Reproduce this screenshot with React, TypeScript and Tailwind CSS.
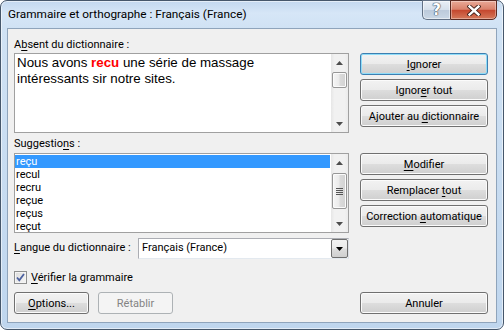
import React from "react";

function U({ children }: { children: React.ReactNode }) {
  return <span className="underline underline-offset-[2px] decoration-1">{children}</span>;
}

function Btn({
  children,
  w,
  def = false,
  disabled = false,
}: {
  children: React.ReactNode;
  w: string;
  def?: boolean;
  disabled?: boolean;
}) {
  if (disabled) {
    return (
      <div
        className={`${w} h-[22px] shrink-0 rounded-[3px] border border-[#adb2b5] bg-[#f4f4f4] flex items-center justify-center text-[11px] text-[#838383] leading-none`}
      >
        {children}
      </div>
    );
  }
  return (
    <div
      className={`${w} h-[22px] shrink-0 rounded-[3px] border ${
        def
          ? "border-[#3c7fb1] shadow-[inset_0_0_0_1px_#8fdcf8]"
          : "border-[#707070] shadow-[inset_0_0_0_1px_#fbfbfb]"
      } bg-[linear-gradient(to_bottom,#f2f2f2_0%,#ebebeb_48%,#dddddd_52%,#cfcfcf_100%)] flex items-center justify-center text-[11px] text-black leading-none`}
    >
      <span>{children}</span>
    </div>
  );
}

function UpArrow() {
  return (
    <svg width="7" height="4" viewBox="0 0 7 4">
      <path d="M3.5 0 L7 4 L0 4 Z" fill="#4d4d4d" />
    </svg>
  );
}
function DownArrow({ color = "#4d4d4d" }: { color?: string }) {
  return (
    <svg width="7" height="4" viewBox="0 0 7 4">
      <path d="M0 0 L7 0 L3.5 4 Z" fill={color} />
    </svg>
  );
}

function Thumb({ h, mt, grip = false }: { h: string; mt: string; grip?: boolean }) {
  return (
    <div
      className={`${h} ${mt} mx-[1px] rounded-[2px] border border-[#979797] bg-[linear-gradient(to_right,#f5f5f5_0%,#ebebeb_45%,#dadada_55%,#d2d2d2_100%)] shadow-[inset_0_0_0_1px_#fbfbfb] flex flex-col items-center justify-center gap-[1px]`}
    >
      {grip && (
        <>
          <div className="w-[7px] h-px bg-[#555]" />
          <div className="w-[7px] h-px bg-[#555]" />
          <div className="w-[7px] h-px bg-[#555]" />
          <div className="w-[7px] h-px bg-[#555]" />
        </>
      )}
    </div>
  );
}

function VScroll({ children }: { children: React.ReactNode }) {
  return (
    <div className="w-[17px] shrink-0 flex flex-col bg-[linear-gradient(to_right,#e6e6e6_0%,#f1f1f1_20%,#f1f1f1_80%,#ebebeb_100%)]">
      <div className="h-[17px] flex items-center justify-center shrink-0">
        <UpArrow />
      </div>
      <div className="flex-1">{children}</div>
      <div className="h-[17px] flex items-center justify-center shrink-0">
        <DownArrow />
      </div>
    </div>
  );
}

export default function App() {
  return (
    <div className="w-[504px] h-[330px] overflow-hidden bg-white">
      <div className="w-[504px] h-[330px] rounded-[7px] border border-[#46576b] bg-[linear-gradient(to_bottom,#c3d8ef_0px,#d6e6f7_12px,#d0e2f4_27px,#bfd6ee_100%)] shadow-[inset_0_0_0_1px_rgba(255,255,255,0.55)] flex flex-col font-['Roboto',sans-serif] text-[11px] text-black">
        {/* title bar */}
        <div className="h-[27px] flex items-start shrink-0">
          <div className="pl-[7px] pt-[6px] leading-[15px] text-[11.8px]">Grammaire et orthographe : Français (France)</div>
          <div className="ml-auto mr-[6px] flex -mt-px">
            <div className="w-[28px] h-[20px] border border-[#627185] border-r-0 rounded-bl-[5px] bg-[linear-gradient(to_bottom,#e9eff6_0%,#d6e0eb_48%,#bccadb_52%,#cad7e5_100%)] shadow-[inset_0_0_0_1px_rgba(255,255,255,0.5)] flex items-center justify-center">
              <span className="text-white font-bold text-[15px] leading-none font-['DejaVu_Sans',sans-serif] [text-shadow:0_0_1px_#3a4655,0_0_1px_#3a4655,0_0_1px_#3a4655]">
                ?
              </span>
            </div>
            <div className="w-[47px] h-[20px] border border-[#5b2a22] rounded-br-[5px] bg-[linear-gradient(to_bottom,#e9a997_0%,#d9816b_46%,#c5482f_52%,#d5795b_100%)] shadow-[inset_0_0_0_1px_rgba(255,255,255,0.35)] flex items-center justify-center">
              <svg width="14" height="11" viewBox="0 0 14 11">
                <path d="M2.5 1.5 L11.5 9.5 M11.5 1.5 L2.5 9.5" stroke="#3b1d17" strokeWidth="4.2" strokeLinecap="square" />
                <path d="M2.5 1.5 L11.5 9.5 M11.5 1.5 L2.5 9.5" stroke="#ffffff" strokeWidth="2.4" strokeLinecap="square" />
              </svg>
            </div>
          </div>
        </div>

        {/* client area */}
        <div className="mx-[6px] mb-[6px] flex-1 border border-[#8fa4bb] bg-[#f0f0f0] pl-[6px] pr-[8px] pt-[8px] flex flex-col">
          <div className="h-[15px] leading-[15px]">
            A<U>b</U>sent du dictionnaire :
          </div>
          <div className="mt-px flex">
            <div className="w-[335px] h-[80px] border border-[#a0a0a0] bg-white flex">
              <div className="flex-1 pl-[2px] pt-px font-['Liberation_Sans',Arial,sans-serif] text-[13.33px] leading-[16px] text-black">
                Nous avons <span className="text-[#ff0000] font-bold">recu</span> une série de massage
                <br />
                intéressants sir notre sites.
              </div>
              <VScroll>
                <Thumb h="h-[16px]" mt="mt-px" />
              </VScroll>
            </div>
            <div className="ml-[11px] w-[128px] flex flex-col gap-[4px]">
              <Btn w="w-[128px]" def>
                <U>I</U>gnorer
              </Btn>
              <Btn w="w-[128px]">
                Ignor<U>e</U>r tout
              </Btn>
              <Btn w="w-[128px]">
                Ajouter au <U>d</U>ictionnaire
              </Btn>
            </div>
          </div>

          <div className="mt-[3px] h-[15px] leading-[15px]">
            Suggestio<U>n</U>s :
          </div>
          <div className="mt-[2px] flex">
            <div className="w-[335px] h-[80px] border border-[#a0a0a0] bg-white flex overflow-hidden">
              <div className="flex-1 pt-px overflow-hidden">
                <div className="h-[13px] leading-[13px] bg-[#3399ff] text-white pl-px mr-px">reçu</div>
                <div className="h-[13px] leading-[13px] pl-px">recul</div>
                <div className="h-[13px] leading-[13px] pl-px">recru</div>
                <div className="h-[13px] leading-[13px] pl-px">reçue</div>
                <div className="h-[13px] leading-[13px] pl-px">reçus</div>
                <div className="h-[13px] leading-[13px] pl-px">reçut</div>
              </div>
              <VScroll>
                <Thumb h="h-[36px]" mt="mt-[2px]" grip />
              </VScroll>
            </div>
            <div className="ml-[11px] w-[128px] flex flex-col gap-[4px]">
              <Btn w="w-[128px]">
                <U>M</U>odifier
              </Btn>
              <Btn w="w-[128px]">
                Remplacer <U>t</U>out
              </Btn>
              <Btn w="w-[128px]">
                Correction <U>a</U>utomatique
              </Btn>
            </div>
          </div>

          <div className="mt-[5px] w-[335px] h-[21px] flex items-center">
            <div className="w-[124px] shrink-0 whitespace-nowrap">
              <U>L</U>angue du dictionnaire :
            </div>
            <div className="w-[211px] h-[21px] border border-[#abadb3] border-b-[#e3e9ef] border-r-[#dbdfe6] bg-white flex items-center">
              <div className="flex-1 pl-[3px]">Français (France)</div>
              <div className="w-[17px] h-[19px] rounded-[2px] border border-[#6e6e6e] bg-[linear-gradient(to_bottom,#f2f2f2_0%,#ebebeb_48%,#dddddd_52%,#cfcfcf_100%)] flex items-center justify-center">
                <DownArrow color="#000000" />
              </div>
            </div>
          </div>

          <div className="mt-[12px] h-[13px] flex items-center">
            <div className="w-[13px] h-[13px] border border-[#8e8f8f] bg-[linear-gradient(135deg,#dcdcdc_0%,#f6f6f6_100%)] shadow-[inset_0_0_0_1px_#f4f4f4] flex items-center justify-center">
              <svg width="11" height="11" viewBox="0 0 11 11">
                <path d="M2 5.5 L4.3 8.3 L9 2" fill="none" stroke="#4c61a0" strokeWidth="1.8" />
              </svg>
            </div>
            <div className="ml-[4px] leading-[15px]">
              <U>V</U>érifier la grammaire
            </div>
          </div>

          <div className="mt-[8px] flex">
            <Btn w="w-[75px]">
              <U>O</U>ptions...
            </Btn>
            <div className="ml-[9px]">
              <Btn w="w-[75px]" disabled>
                Rétablir
              </Btn>
            </div>
            <div className="ml-auto">
              <Btn w="w-[128px]">Annuler</Btn>
            </div>
          </div>
        </div>
      </div>
    </div>
  );
}
